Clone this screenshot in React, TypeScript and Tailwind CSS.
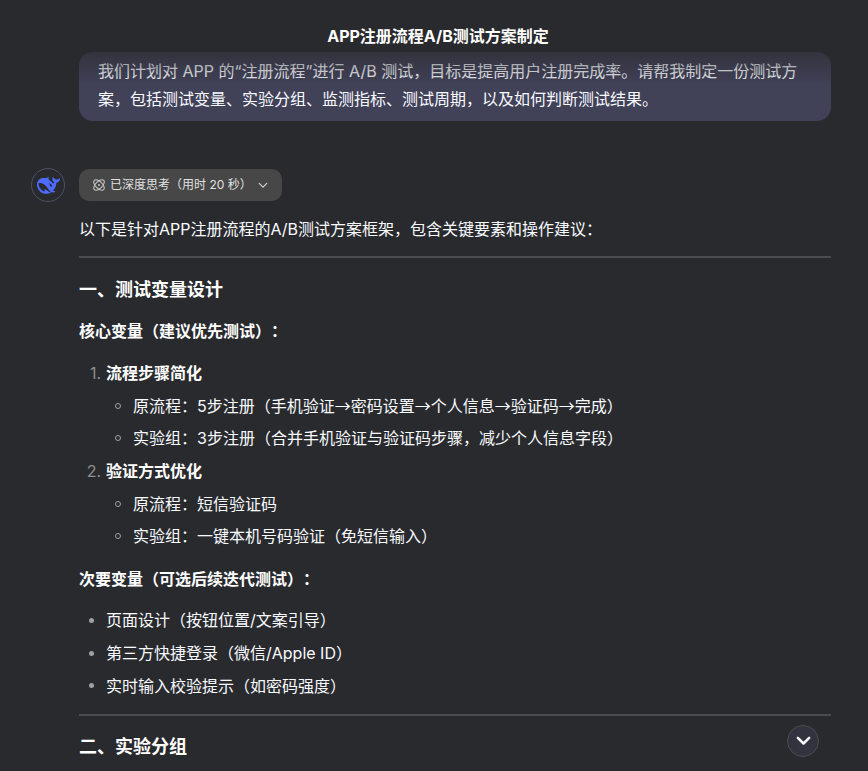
import React from "react";

const font = { fontFamily: 'Inter, "Noto Sans CJK SC", sans-serif' };

function Whale() {
  return (
    <svg viewBox="0 0 24 24" className="w-[23px] h-[23px]" fill="#4d6bfe">
      <path d="M23.748 4.482c-.254-.124-.364.113-.512.234-.051.039-.094.09-.137.136-.372.397-.806.657-1.373.626-.829-.046-1.537.214-2.163.848-.133-.782-.575-1.248-1.247-1.548-.352-.156-.708-.311-.955-.65-.172-.241-.219-.51-.305-.774-.055-.16-.11-.323-.293-.35-.2-.031-.278.136-.356.276-.313.572-.434 1.202-.422 1.84.027 1.436.633 2.58 1.838 3.393.137.093.172.187.129.323-.082.28-.18.552-.266.833-.055.179-.137.217-.329.14a5.526 5.526 0 01-1.736-1.18c-.857-.828-1.631-1.742-2.597-2.458a11.365 11.365 0 00-.689-.471c-.985-.957.13-1.743.388-1.836.27-.098.093-.432-.779-.428-.872.004-1.67.295-2.687.684a3.055 3.055 0 01-.465.137 9.597 9.597 0 00-2.883-.102c-1.885.21-3.39 1.102-4.497 2.623C.082 8.606-.231 10.684.152 12.85c.403 2.284 1.569 4.175 3.36 5.653 1.858 1.533 3.997 2.284 6.438 2.14 1.482-.085 3.133-.284 4.994-1.86.47.234.962.327 1.78.397.63.059 1.236-.03 1.705-.128.735-.156.684-.837.419-.961-2.155-1.004-1.682-.595-2.113-.926 1.096-1.296 2.746-2.642 3.392-7.003.05-.347.007-.565 0-.845-.004-.17.035-.237.23-.256a4.173 4.173 0 001.545-.475c1.396-.763 1.96-2.015 2.093-3.517.02-.23-.004-.467-.247-.588zM11.581 18c-2.089-1.642-3.102-2.183-3.52-2.16-.392.024-.321.471-.235.763.09.288.207.486.371.739.114.167.192.416-.113.603-.673.416-1.842-.14-1.897-.167-1.361-.802-2.5-1.86-3.301-3.307-.774-1.393-1.224-2.887-1.298-4.482-.02-.386.093-.522.477-.592a4.696 4.696 0 011.529-.039c2.132.312 3.946 1.265 5.468 2.774.868.86 1.525 1.887 2.202 2.891.72 1.066 1.494 2.082 2.48 2.914.348.292.625.514.891.677-.802.09-2.14.11-3.054-.614zm1-6.44a.306.306 0 01.415-.287.302.302 0 01.2.288.306.306 0 01-.31.307.303.303 0 01-.304-.308zm3.11 1.596c-.2.081-.399.151-.59.16a1.245 1.245 0 01-.798-.254c-.274-.23-.47-.358-.552-.758a1.73 1.730 0 01.016-.588c.07-.327-.008-.537-.239-.727-.187-.156-.426-.199-.688-.199a.559.559 0 01-.254-.078c-.11-.054-.2-.19-.114-.358.028-.054.16-.186.192-.21.356-.202.767-.136 1.146.016.352.144.618.408 1.001.782.391.451.462.576.685.914.176.265.336.537.445.848.067.195-.019.354-.25.452z" />
    </svg>
  );
}

function Atom() {
  return (
    <svg viewBox="0 0 12 12" className="w-[12px] h-[12px]" fill="none" stroke="#c4c4c4" strokeWidth="1.100">
      <ellipse cx="6" cy="6" rx="6.600" ry="3.400" transform="rotate(45 6 6)" />
      <ellipse cx="6" cy="6" rx="6.600" ry="3.400" transform="rotate(-45 6 6)" />
      <circle cx="6" cy="6" r="1" fill="#c4c4c4" stroke="none" />
    </svg>
  );
}

function Chevron({ w, h, sw, color }: { w: number; h: number; sw: number; color: string }) {
  return (
    <svg viewBox="0 0 12 8" width={w} height={h} fill="none" stroke={color} strokeWidth={sw} strokeLinecap="round" strokeLinejoin="round">
      <path d="M1.500 1.500 6 6l4.500-4.500" />
    </svg>
  );
}

function Arrow() {
  return <span className="font-['Noto_Sans_CJK_SC']">→</span>;
}

function Sub({ children }: { children: React.ReactNode }) {
  return (
    <li className="flex h-[32.700px] items-center text-[#f8faff] pl-[27px]">
      <span className="w-[27px] shrink-0 pl-[9px]">
        <span className="block w-[6px] h-[6px] rounded-full border border-[#a0a0a0]" />
      </span>
      <span>{children}</span>
    </li>
  );
}

function Num({ n, children }: { n: string; children: React.ReactNode }) {
  return (
    <li className="flex h-[32.700px] items-center text-white font-bold">
      <span className="w-[27px] shrink-0 text-right pr-[5px] font-normal text-[#8f8f8f]">{n}</span>
      <span>{children}</span>
    </li>
  );
}

function Dot({ children }: { children: React.ReactNode }) {
  return (
    <li className="flex h-[32.700px] items-center text-[#f8faff]">
      <span className="w-[27px] shrink-0 pl-[10px]">
        <span className="block w-[5px] h-[5px] rounded-full bg-[#a0a0a0]" />
      </span>
      <span>{children}</span>
    </li>
  );
}

export default function App() {
  return (
    <div className="relative h-[771px] w-[868px] overflow-hidden bg-[#292a2d] text-[16px] leading-[28px] text-[#f8faff] [text-spacing-trim:space-all]" style={font}>
      <div className="pt-[52px] pl-[31px] pr-[37px]">
        <div className="ml-[48px] h-[69px] rounded-[14px] bg-[#414158] px-[19px] py-[5px]">
          我们计划对 APP 的“注册流程”进行 A/B 测试，目标是提高用户注册完成率。请帮我制定一份测试方案，包括测试变量、实验分组、监测指标、测试周期，以及如何判断测试结果。
        </div>

        <div className="mt-[47px] flex gap-[14px]">
          <div className="w-[34px] h-[34px] rounded-full border border-[#4a5168] flex items-center justify-center shrink-0">
            <Whale />
          </div>
          <div className="flex-1 min-w-0">
            <div className="w-[203px] h-[32px] mt-px rounded-[10px] bg-[#474747] flex items-center pl-[14px] text-[12px] text-[#e0e0e0]">
              <Atom />
              <span className="ml-[5px]">已深度思考（用时 20 秒）</span>
              <span className="ml-[6px]"><Chevron w={10} h={7} sw={1.500} color="#d0d0d0" /></span>
            </div>

            <p className="mt-[14px]">以下是针对APP注册流程的A/B测试方案框架，包含关键要素和操作建议：</p>
            <hr className="mt-[13px] h-[2px] border-0 bg-[#4c4c4f]" />
            <h3 className="mt-[18px] text-[18px] font-bold text-white leading-[28px]">一、测试变量设计</h3>
            <p className="mt-[13px] font-bold text-white">核心变量（建议优先测试）：</p>
            <ol className="mt-[11.600px]">
              <Num n="1.">流程步骤简化</Num>
              <Sub>原流程：5步注册（手机验证<Arrow />密码设置<Arrow />个人信息<Arrow />验证码<Arrow />完成）</Sub>
              <Sub>实验组：3步注册（合并手机验证与验证码步骤，减少个人信息字段）</Sub>
              <Num n="2.">验证方式优化</Num>
              <Sub>原流程：短信验证码</Sub>
              <Sub>实验组：一键本机号码验证（免短信输入）</Sub>
            </ol>
            <p className="mt-[12.400px] font-bold text-white">次要变量（可选后续迭代测试）：</p>
            <ul className="mt-[11px]">
              <Dot>页面设计（按钮位置/文案引导）</Dot>
              <Dot>第三方快捷登录（微信/Apple ID）</Dot>
              <Dot>实时输入校验提示（如密码强度）</Dot>
            </ul>
            <hr className="mt-[12px] h-[2px] border-0 bg-[#4c4c4f]" />
            <h3 className="mt-[17px] text-[18px] font-bold text-white leading-[28px]">二、实验分组</h3>
          </div>
        </div>
      </div>

      <div className="absolute top-0 left-0 right-0 h-[52px] pt-[22px]">
        <div className="text-center text-white font-bold leading-[28px] pl-[8px]">APP注册流程A/B测试方案制定</div>
      </div>
      <div className="absolute top-[52px] left-0 right-0 h-[34px] bg-gradient-to-b from-[#292a2d]/60 to-[#292a2d]/0" />

      <button className="absolute left-[787px] top-[725px] w-[32px] h-[32px] rounded-full bg-[#33333f] border border-[#4c4c4f] flex items-center justify-center">
        <Chevron w={15} h={10} sw={2} color="#f8faff" />
      </button>
    </div>
  );
}
